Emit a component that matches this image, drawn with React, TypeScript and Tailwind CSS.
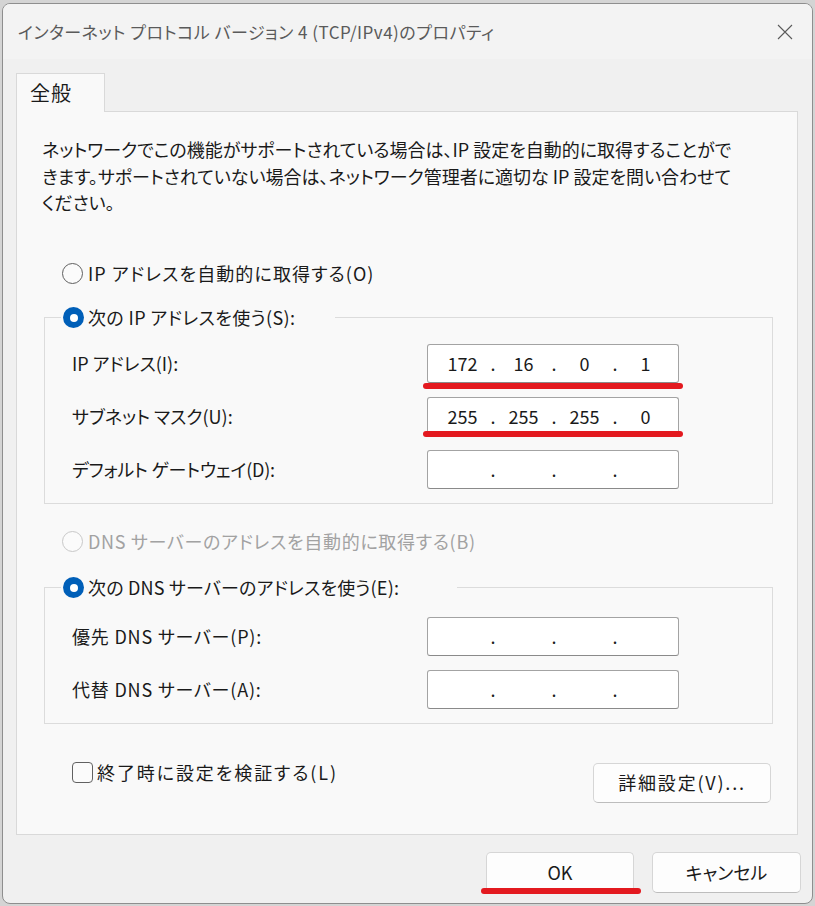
import React from "react"

const ipRows = [
  { label: "IP アドレス(I):", value: ["172", "16", "0", "1"], mark: "top-[38px]", track: "" },
  { label: "サブネット マスク(U):", value: ["255", "255", "255", "0"], mark: "top-[33px]", track: "" },
  { label: "デフォルト ゲートウェイ(D):", value: ["", "", "", ""], mark: "", track: "tracking-[-0.2px]" },
]

const dnsRows = [
  { label: "優先 DNS サーバー(P):", value: ["", "", "", ""], mark: "", track: "tracking-[0.8px]" },
  { label: "代替 DNS サーバー(A):", value: ["", "", "", ""], mark: "", track: "tracking-[0.8px]" },
]

function Radio({ checked, disabled }: { checked?: boolean; disabled?: boolean }) {
  if (checked) {
    return (
      <span className="w-[21px] h-[21px] rounded-full bg-[#005fb8] flex items-center justify-center shrink-0">
        <span className="w-[8px] h-[8px] rounded-full bg-white" />
      </span>
    )
  }
  return (
    <span
      className={`w-[21px] h-[21px] rounded-full border bg-[#fbfbfb] shrink-0 ${
        disabled ? "border-[#c8c8c8]" : "border-[#5f5f5f]"
      }`}
    />
  )
}

function IpBox({ value, mark }: { value: string[]; mark: string }) {
  return (
    <div className="relative w-[252px] h-[39px] bg-white border border-[#a3a3a3] border-b-[#8a8a8a] rounded-[3px] flex items-center pl-[7px] text-[18px] text-[#1a1a1a]">
      {value.map((v, i) => (
        <React.Fragment key={i}>
          <span className="w-[55px] text-center">{v}</span>
          {i < 3 && <span className="w-[6px] text-center">.</span>}
        </React.Fragment>
      ))}
      {mark && (
        <span className={`absolute -left-[5px] -right-[5px] h-[6px] rounded-full bg-[#e3191f] ${mark}`} />
      )}
    </div>
  )
}

function Group({
  title,
  titleTrack,
  legendWidth,
  rows,
  top,
}: {
  title: string
  titleTrack: string
  legendWidth: string
  rows: typeof ipRows
  top: string
}) {
  return (
    <fieldset className={`ml-[27px] w-[729px] border border-[#dcdcdc] pb-[14px] ${top}`}>
      <legend className={`ml-[16px] pl-[2px] h-[22px] flex items-center gap-[4px] ${legendWidth}`}>
        <Radio checked />
        <span className={titleTrack}>{title}</span>
      </legend>
      <div className="flex flex-col gap-[14px]">
        {rows.map(r => (
          <div key={r.label} className="flex items-center pl-[27px]">
            <span className={`w-[355px] ${r.track}`}>{r.label}</span>
            <IpBox value={r.value} mark={r.mark} />
          </div>
        ))}
      </div>
    </fieldset>
  )
}

export default function App() {
  return (
    <div className="w-[815px] h-[906px] bg-[#d4d4d4] pl-[2px] pt-[3px] font-['Noto_Sans_CJK_JP',sans-serif] [font-feature-settings:'palt'] text-[#1a1a1a]">
      <div className="w-[811px] h-[901px] border border-[#8e8e8e] rounded-[8px] bg-[#f0f0f0] overflow-hidden flex flex-col">
        <div className="h-[55px] bg-[#f3f3f3] flex items-center justify-between pl-[15px] pr-[19px]">
          <span className="text-[17px] tracking-[0.5px] text-[#5a5a5a]">
            インターネット プロトコル バージョン 4 (TCP/IPv4)のプロパティ
          </span>
          <svg width="16" height="16" viewBox="0 0 16 16" className="text-[#5a5a5a]">
            <path d="M1 1L15 15M15 1L1 15" stroke="currentColor" strokeWidth="1.1" />
          </svg>
        </div>

        <div className="pl-[13px] pt-[14px]">
          <div className="relative z-10 -mb-px w-[89px] h-[39px] bg-[#f9f9f9] border border-b-0 border-[#d9d9d9] pl-[13px] flex items-center text-[20px] tracking-[1px]">
            全般
          </div>
          <div className="w-[782px] h-[724px] bg-[#f9f9f9] border border-[#d9d9d9] text-[18px]">
            <p className="pl-[25px] pt-[24px] leading-[26.5px]">
              ネットワークでこの機能がサポートされている場合は、IP 設定を自動的に取得することがで
              <br />
              きます。サポートされていない場合は、ネットワーク管理者に適切な IP 設定を問い合わせて
              <br />
              ください。
            </p>

            <div className="ml-[45px] mt-[47px] h-[22px] flex items-center gap-[5px]">
              <Radio />
              <span className="tracking-[1.1px]">IP アドレスを自動的に取得する(O)</span>
            </div>

            <Group
              title="次の IP アドレスを使う(S):"
              titleTrack="tracking-[0.4px]"
              legendWidth="w-[274px]"
              rows={ipRows}
              top="mt-[22px] pt-[15px]"
            />

            <div className="ml-[45px] mt-[27px] h-[22px] flex items-center gap-[5px] text-[#a2a2a2]">
              <Radio disabled />
              <span className="tracking-[0.7px]">DNS サーバーのアドレスを自動的に取得する(B)</span>
            </div>

            <Group
              title="次の DNS サーバーのアドレスを使う(E):"
              titleTrack="tracking-[0.2px]"
              legendWidth="w-[396px]"
              rows={dnsRows}
              top="mt-[24px] pt-[18px]"
            />

            <div className="mt-[38px] flex items-start justify-between pl-[55px] pr-[26px]">
              <div className="h-[22px] flex items-center gap-[4px]">
                <span className="w-[21px] h-[21px] rounded-[4px] border border-[#616161] bg-[#fbfbfb]" />
                <span className="tracking-[1.9px]">終了時に設定を検証する(L)</span>
              </div>
              <button className="mt-[1px] w-[178px] h-[40px] bg-[#fdfdfd] border border-[#d6d6d6] border-b-[#bdbdbd] rounded-[5px] tracking-[1.8px]">
                詳細設定(V)...
              </button>
            </div>
          </div>
        </div>

        <div className="mt-[17px] flex justify-end gap-[18px] pr-[11px] text-[18px]">
          <div className="relative">
            <button className="w-[148px] h-[41px] bg-[#fdfdfd] border border-[#d6d6d6] border-b-[#bdbdbd] rounded-[5px]">
              OK
            </button>
            <span className="absolute -left-[5px] -right-[7px] top-[36px] h-[6px] rounded-full bg-[#e3191f]" />
          </div>
          <button className="w-[149px] h-[41px] bg-[#fdfdfd] border border-[#d6d6d6] border-b-[#bdbdbd] rounded-[5px]">
            キャンセル
          </button>
        </div>
      </div>
    </div>
  )
}
